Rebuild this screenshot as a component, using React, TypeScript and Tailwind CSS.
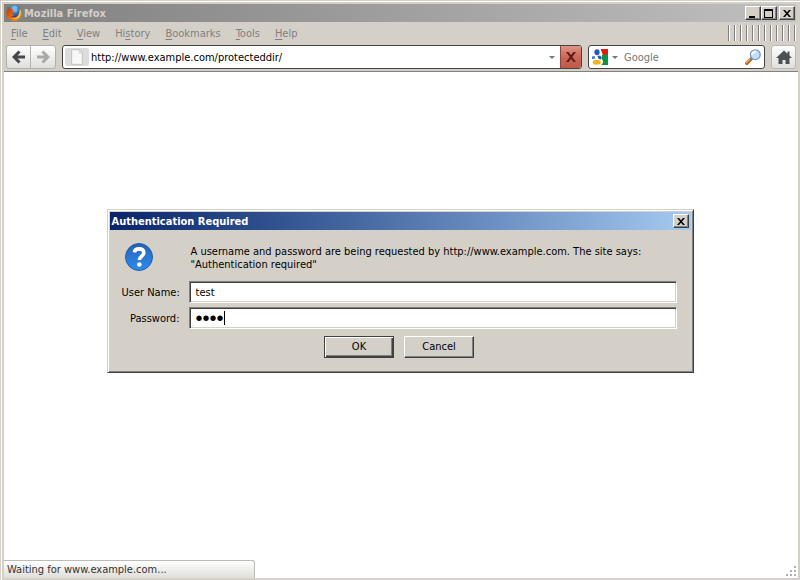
import React, { useState } from 'react';
import { cva } from 'class-variance-authority';
import { clsx } from 'clsx';

const raised =
    'border border-t-white border-l-white border-r-[#404040] border-b-[#404040] bg-[#d4d0c8] shadow-[inset_-1px_-1px_0_#808080]';

const menus = ['File', 'Edit', 'View', 'History', 'Bookmarks', 'Tools', 'Help'];
const accessKeys: Record<string, number> = { History: 2 };

const pushButton = cva('h-[22px] w-[70px] text-[11px] leading-3 text-black', {
    variants: {
        primary: {
            true: 'border border-[#404040] bg-[#d4d0c8] shadow-[inset_1px_1px_0_#fff,inset_-1px_-1px_0_#404040,inset_-2px_-2px_0_#808080]',
            false: raised,
        },
    },
});

function FirefoxLogo() {
    return (
        <svg viewBox="0 0 16 16" className="size-4 shrink-0" aria-hidden="true">
            <defs>
                <radialGradient id="globe" cx="0.5" cy="0.25" r="0.7">
                    <stop offset="0" stopColor="#8cc8f4" />
                    <stop offset="0.5" stopColor="#2f74c0" />
                    <stop offset="1" stopColor="#14286a" />
                </radialGradient>
                <linearGradient id="fox" x1="0" y1="0" x2="1" y2="1">
                    <stop offset="0" stopColor="#b8380c" />
                    <stop offset="0.5" stopColor="#e8680c" />
                    <stop offset="1" stopColor="#f8a820" />
                </linearGradient>
            </defs>
            <circle cx="8.200" cy="7.400" r="7.200" fill="url(#globe)" />
            <path d="M7 1.600 9.500 1 11.500 2.600 10.400 4.400 11.400 6 9.400 7 7.600 6.200 6 4Z" fill="#79bdf0" />
            <path
                d="M1.800 1.600C1.500 2.600 1.600 3.300 1.900 4 .7 5.400.1 7.200.3 9.200.8 13.200 4 15.900 8 15.900c4.400 0 7.800-3.300 7.800-7.800 0-2.600-1-4.800-2.700-6.200.9 1.500 1.200 3 1 4.600-.3-.8-.6-1.200-1-1.500.5 2.600-.2 5.500-2.500 6.700-2.100 1.100-4.500.6-5.700-.9 1.300.5 2.700.1 3.500-.8-.8.2-1.700-.1-2-.7-.3-.7.1-1.100.9-1.200.1-.6 1.100-.8 1.400-1.300-.8-.3-1.700-.4-2.300-1.100-.2-.6 0-1.200.5-1.700-1.200-.5-2.400-.4-3.200 0-.7-.5-1.400-1.200-1.900-2.400Z"
                fill="url(#fox)"
            />
            <path d="M13.700 3.200c1.600 2.900 1.300 6.400-.6 8.600-1.600 1.900-4.100 2.500-6.500 1.900 4.600-.3 7.700-3.500 7.100-10.500Z" fill="#ffd84a" />
        </svg>
    );
}

function ArrowIcon({ className }: { className?: string }) {
    return (
        <svg viewBox="0 0 14 14" className={clsx('size-3.5', className)} aria-hidden="true">
            <path d="M7.500 1.500 2 7l5.500 5.500M2.500 7H13" fill="none" stroke="currentColor" strokeWidth="3" />
        </svg>
    );
}

function DropArrow() {
    return (
        <svg viewBox="0 0 6 3" className="h-[3px] w-1.5" aria-hidden="true">
            <path d="M0 0h6L3 3Z" fill="#777" />
        </svg>
    );
}

function CrossIcon({ className }: { className?: string }) {
    return (
        <svg viewBox="0 0 8 7" preserveAspectRatio="none" className={clsx(className ?? 'h-[7px] w-2')} fill="currentColor" aria-hidden="true">
            <path d="M0 0h2l2 2.300L6 0h2L5 3.500 8 7H6L4 4.700 2 7H0l3-3.500Z" />
        </svg>
    );
}

function PageIcon() {
    return (
        <svg viewBox="0 0 16 16" className="size-4" aria-hidden="true">
            <path d="M2.500.5h8l3 3v12h-11Z" fill="#eee" stroke="#c6c6c6" />
            <path d="M4 2h5.500v3.500H12V14H4Z" fill="#f8f8f8" />
            <path d="M10.500.5v3h3" fill="none" stroke="#d2d2d2" />
        </svg>
    );
}

function GoogleIcon() {
    return (
        <svg viewBox="0 0 16 16" className="size-4" aria-hidden="true">
            <path d="M8.500 0H16v6h-5.500Z" fill="#e01c14" />
            <path d="M10.500 5.500H16V16H9c2-1.200 2.500-3 1.500-5L9 9Z" fill="#109040" />
            <path d="M0 0h8.500l2 5L9 9l1.500 3L9 16H0Z" fill="#fff" />
            <ellipse cx="5" cy="3.200" rx="2.600" ry="3" fill="#2458b4" />
            <path d="M0 7.500 2.500 7l.8 2.500L0 10Z" fill="#3c78cc" />
            <path d="M5.500 7 8 6.500c1.200 1 1.600 2.500.8 4L6.500 9.800Z" fill="#2458b4" />
            <ellipse cx="4.800" cy="13.300" rx="4" ry="2.500" fill="#f4b418" />
        </svg>
    );
}

function MagnifierIcon() {
    return (
        <svg viewBox="0 0 16 16" className="size-4" aria-hidden="true">
            <path d="M1.800 14.200 6 10" stroke="#b8601c" strokeWidth="3.400" strokeLinecap="round" />
            <path d="M1.500 13.500 5.500 9.600" stroke="#f4b060" strokeWidth="1.400" strokeLinecap="round" />
            <path d="m5.300 10.700 2-2" stroke="#6c7c94" strokeWidth="2.400" />
            <circle cx="10.300" cy="5.700" r="4.900" fill="#bfe2fa" stroke="#8296c0" strokeWidth="1.300" />
            <path d="M7 5.500c.3-2 2-3 4-2.800" fill="none" stroke="#fff" strokeWidth="1.800" />
        </svg>
    );
}

function HomeIcon() {
    return (
        <svg viewBox="0 0 16 15" className="h-[15px] w-4" aria-hidden="true">
            <path d="M8 .5 0 8h2.500v6H6.500v-4h3v4h4V8H16l-2.500-2.400V1.500h-2v2.200Z" fill="#4c5054" />
        </svg>
    );
}

function QuestionIcon() {
    return (
        <svg viewBox="0 0 28 28" className="size-7" role="img" aria-label="Question">
            <defs>
                <linearGradient id="ball" x1="0" y1="0" x2="0" y2="1">
                    <stop offset="0" stopColor="#2460b4" />
                    <stop offset="0.5" stopColor="#2a78d4" />
                    <stop offset="1" stopColor="#2e8ae8" />
                </linearGradient>
            </defs>
            <circle cx="14" cy="14" r="13.500" fill="url(#ball)" stroke="#2060b0" />
            <path
                d="M9.300 9.400C9.700 6.900 11.400 5.900 14 5.900c2.900 0 4.800 1.400 4.800 3.800 0 3.400-4.400 3.600-4.400 7.400"
                fill="none"
                stroke="#fff"
                strokeWidth="3.600"
            />
            <circle cx="14.300" cy="21.500" r="2.300" fill="#fff" />
        </svg>
    );
}

function TitleBar() {
    const button = clsx(raised, 'flex h-3.5 w-4 items-center justify-center text-black');

    return (
        <header className="flex h-[18px] items-center bg-linear-to-r from-[#808080] to-[#c0c0c0] pr-px pl-0.5">
            <FirefoxLogo />
            <h1 className="ml-0.5 grow text-[11px] font-bold text-[#d4d0c8]">Mozilla Firefox</h1>
            <button className={button} aria-label="Minimize">
                <svg viewBox="0 0 10 9" className="h-[9px] w-2.5"><path d="M1 7h6v2H1Z" /></svg>
            </button>
            <button className={button} aria-label="Maximize">
                <svg viewBox="0 0 10 9" className="h-[9px] w-2.5"><path d="M0 0h9v9H0ZM1 2v6h7V2Z" fillRule="evenodd" /></svg>
            </button>
            <button className={clsx(button, 'ml-0.5')} aria-label="Close">
                <CrossIcon />
            </button>
        </header>
    );
}

function MenuBar() {
    return (
        <nav className="flex h-[21px] items-center justify-between text-[#808080]">
            <div className="flex gap-px pt-0.5">
                {menus.map((name) => {
                    const key = accessKeys[name] ?? 0;
                    return (
                        <button key={name} className="px-[7px]">
                            {name.slice(0, key)}
                            <span className="underline underline-offset-2">{name[key]}</span>
                            {name.slice(key + 1)}
                        </button>
                    );
                })}
            </div>
            <div className="h-4 w-[68px] bg-[repeating-linear-gradient(to_right,#808080_0_1px,#fff_1px_2px,transparent_2px_6px)]" />
        </nav>
    );
}

function Toolbar() {
    const [url, setUrl] = useState('http://www.example.com/protecteddir/');
    const field = 'flex h-6 items-center overflow-hidden rounded-[3px] border border-[#444] bg-white';
    const navButton = 'flex h-full w-6 items-center justify-center';

    return (
        <div className="flex h-[29px] items-start gap-1.5 border-b border-[#808080] px-0.5 pt-0.5">
            <div className="flex h-6 divide-x divide-[#b4b4b4] rounded-[3px] border border-[#b0b0ac] bg-linear-to-b from-white to-[#dededc]">
                <button className={navButton} aria-label="Back">
                    <ArrowIcon className="text-[#44464a]" />
                </button>
                <button className={navButton} aria-label="Forward" disabled>
                    <ArrowIcon className="rotate-180 text-[#a8a8a8]" />
                </button>
            </div>
            <div className={clsx(field, 'grow')}>
                <span className="ml-0.5 flex h-[18px] w-6 items-center justify-center rounded-xs bg-[#dcdcdc]">
                    <PageIcon />
                </span>
                <input
                    aria-label="Address"
                    className="min-w-0 grow bg-transparent px-0.5 text-black outline-none"
                    value={url}
                    onChange={(e) => setUrl(e.target.value)}
                />
                <button className="flex h-full w-4 items-center justify-center" aria-label="Show history">
                    <DropArrow />
                </button>
                <button
                    className="flex h-full w-[21px] items-center justify-center border-l border-[#8c4840] bg-linear-to-b from-[#e09484] via-[#cc6858] to-[#c05848] text-[#5c1c14]"
                    aria-label="Stop"
                >
                    <CrossIcon className="size-2.5" />
                </button>
            </div>
            <div className={clsx(field, 'w-[177px] shrink-0 px-[3px]')}>
                <button className="flex items-center gap-1" aria-label="Search engine">
                    <GoogleIcon />
                    <DropArrow />
                </button>
                <input
                    type="search"
                    aria-label="Search"
                    placeholder="Google"
                    className="ml-1.5 min-w-0 grow bg-transparent outline-none placeholder:text-[#777]"
                />
                <button aria-label="Go">
                    <MagnifierIcon />
                </button>
            </div>
            <button
                className="flex h-6 w-[25px] shrink-0 items-center justify-center rounded-[3px] border border-[#b8b8b4] bg-linear-to-b from-white to-[#dededc]"
                aria-label="Home"
            >
                <HomeIcon />
            </button>
        </div>
    );
}

interface FieldProps extends React.InputHTMLAttributes<HTMLInputElement> {
    id: string;
    label: string;
}

function Field({ id, label, className, ...props }: FieldProps) {
    return (
        <>
            <label htmlFor={id} className="text-right whitespace-nowrap">{label}</label>
            <div className="relative">
                <input
                    id={id}
                    className={clsx(
                        'block h-[22px] w-full border border-t-[#808080] border-r-white border-b-white border-l-[#808080] bg-white px-1.5 text-black shadow-[inset_1px_1px_0_#404040,inset_-1px_-1px_0_#d4d0c8] outline-none',
                        className,
                    )}
                    {...props}
                />
                {props.type === 'password' && (
                    <span className="absolute top-1 left-[35px] h-3.5 w-px bg-black" />
                )}
            </div>
        </>
    );
}

function AuthDialog() {
    const [user, setUser] = useState('test');
    const [password, setPassword] = useState('test');

    return (
        <form
            role="dialog"
            aria-labelledby="auth-title"
            onSubmit={(e) => e.preventDefault()}
            className="w-[587px] border border-t-[#d4d0c8] border-r-[#404040] border-b-[#404040] border-l-[#d4d0c8] bg-[#d4d0c8] p-0.5 shadow-[inset_1px_1px_0_#fff,inset_-1px_-1px_0_#808080]"
        >
            <div className="flex h-[18px] items-center justify-between bg-linear-to-r from-[#0a246a] to-[#a6caf0] px-0.5">
                <h2 id="auth-title" className="font-bold text-white">Authentication Required</h2>
                <button type="button" className={clsx(raised, 'flex h-3.5 w-4 items-center justify-center')} aria-label="Close">
                    <CrossIcon />
                </button>
            </div>
            <div className="grid grid-cols-[58px_1fr] items-center gap-x-[9px] gap-y-1 pt-3 pr-3.5 pb-3 pl-3">
                <div className="self-start pt-px pl-[3px]">
                    <QuestionIcon />
                </div>
                <p className="pt-[3px] pb-1.5 pl-0.5">
                    A username and password are being requested by http://www.example.com. The site says:
                    <br />
                    "Authentication required"
                </p>
                <Field id="user" label="User Name:" value={user} onChange={(e) => setUser(e.target.value)} />
                <Field
                    id="password"
                    label="Password:"
                    type="password"
                    className="font-['Liberation_Sans',sans-serif] text-xl caret-transparent"
                    value={password}
                    onChange={(e) => setPassword(e.target.value)}
                />
                <div className="col-span-2 mt-[3px] flex justify-center gap-2.5">
                    <button type="submit" className={pushButton({ primary: true })}>OK</button>
                    <button type="button" className={pushButton({ primary: false })}>Cancel</button>
                </div>
            </div>
        </form>
    );
}

function SizeGrip() {
    return (
        <svg viewBox="0 0 10 10" className="size-2.5" fill="#b0b0ac" aria-hidden="true">
            <path d="M8 0h2v2H8ZM4 4h2v2H4ZM8 4h2v2H8ZM0 8h2v2H0ZM4 8h2v2H4ZM8 8h2v2H8Z" />
        </svg>
    );
}

export default function App() {
    return (
        <div className="relative flex min-h-screen flex-col bg-[#d4d0c8] pt-1 pr-0.5 pb-0.5 pl-1 font-['DejaVu_Sans_Condensed','DejaVu_Sans',sans-serif] text-[11px] leading-[13px] text-black shadow-[inset_1px_1px_0_#d4d0c8,inset_2px_2px_0_#fff]">
            <div className="pr-0.5">
                <TitleBar />
                <MenuBar />
            </div>
            <Toolbar />
            <main className="flex grow items-end justify-between bg-white">
                <div
                    role="status"
                    className="flex h-[18px] w-[251px] items-center rounded-tr-[3px] border-t border-r border-[#bcbcb4] bg-linear-to-b from-white to-[#dededa] pl-[3px] text-[#333]"
                >
                    Waiting for www.example.com...
                </div>
                <div className="p-0.5">
                    <SizeGrip />
                </div>
            </main>
            <div className="absolute inset-0 flex items-center justify-center pt-0.5">
                <AuthDialog />
            </div>
        </div>
    );
}
